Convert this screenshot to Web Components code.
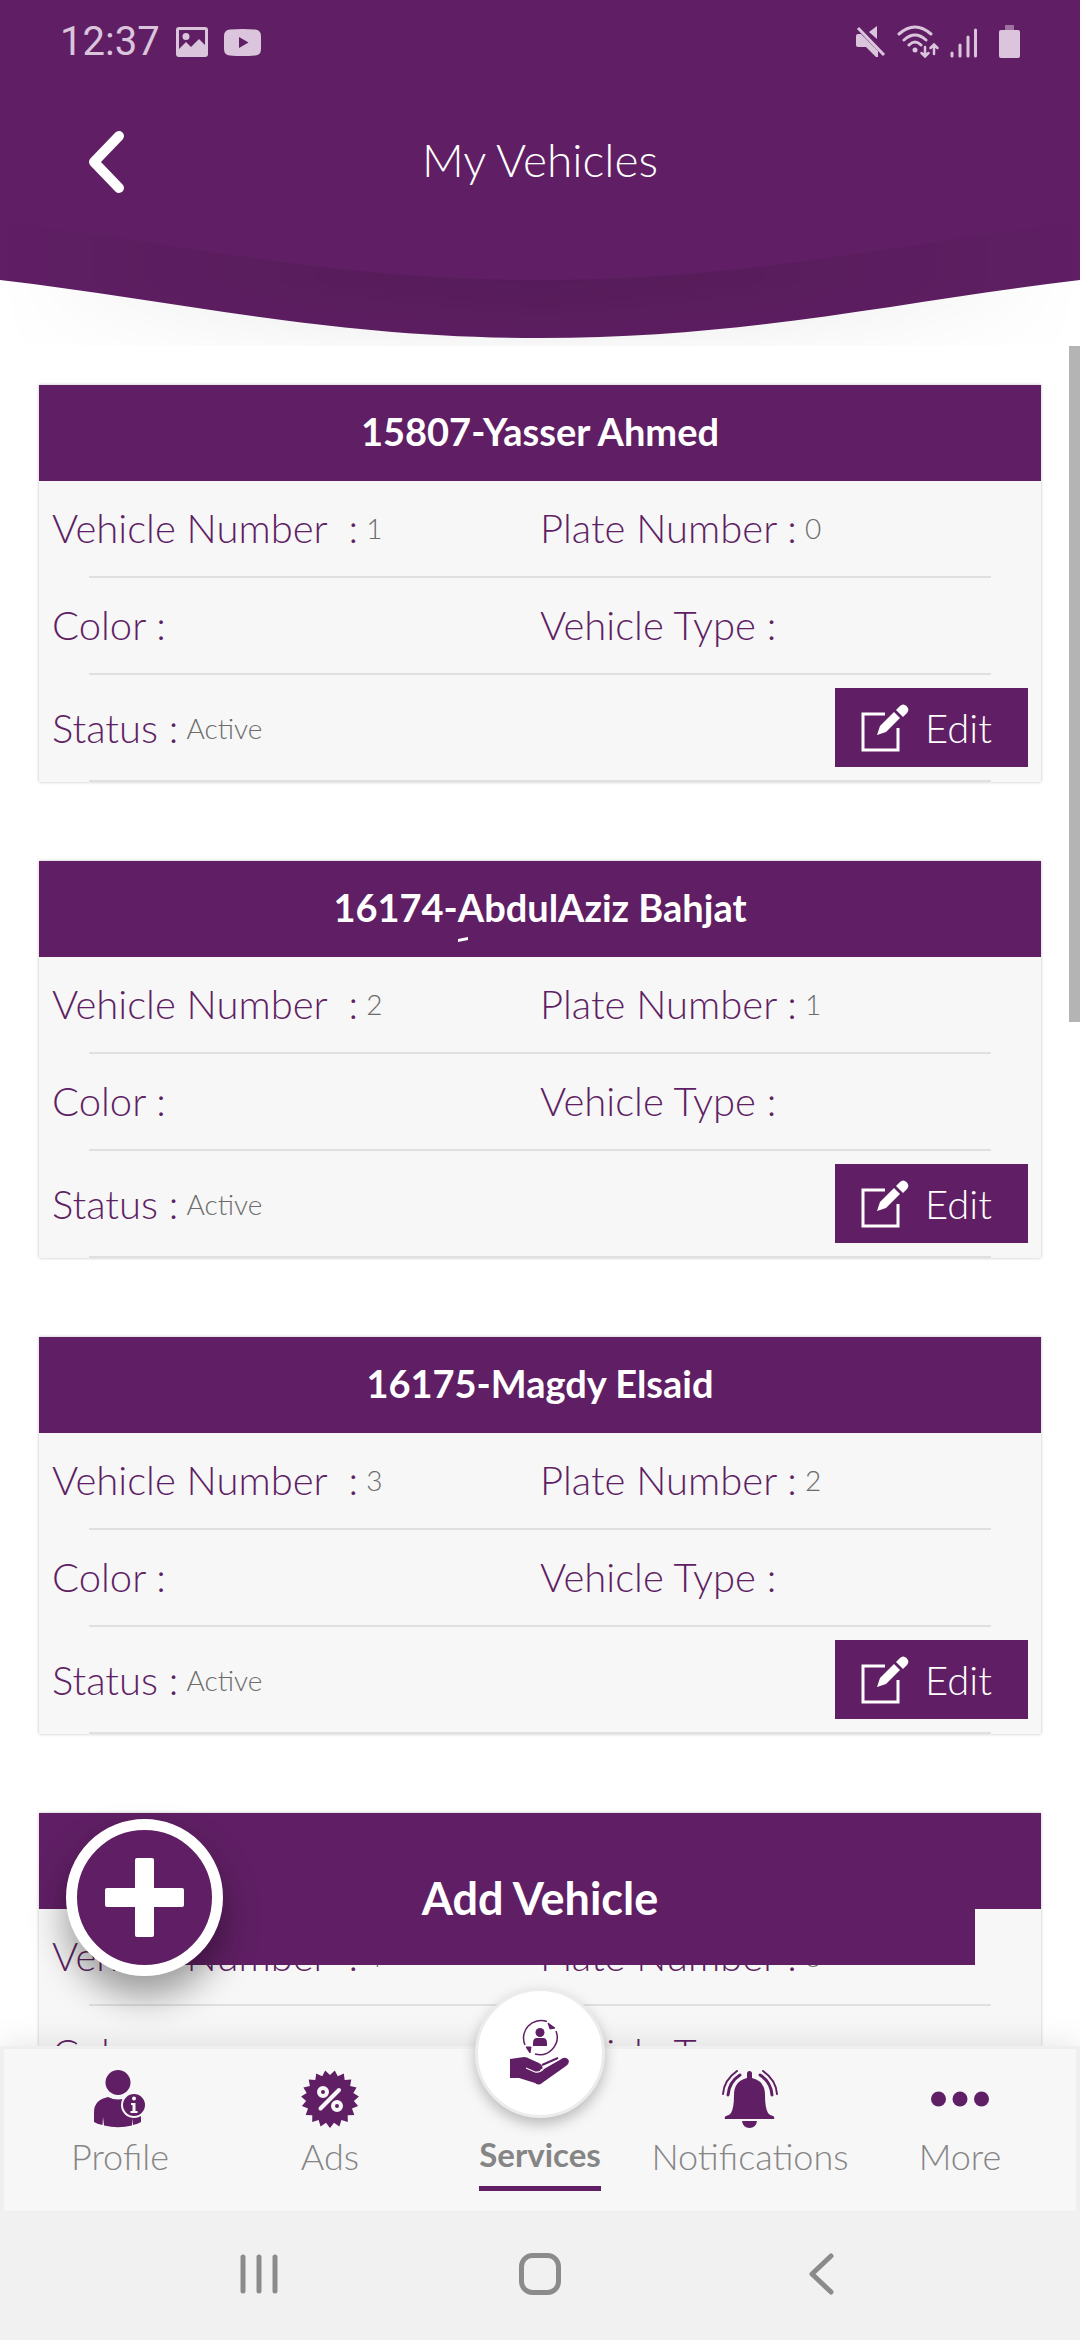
<!DOCTYPE html>
<html lang="en">
<head>
<meta charset="utf-8">
<meta name="viewport" content="width=device-width, initial-scale=1">
<title>My Vehicles</title>
<style>
  :root {
    --brand: #601f64;
    --surface: #f7f7f7;
    --muted: #858585;
  }
  html, body { margin: 0; height: 100%; }
  body {
    font-family: Lato, "Open Sans", sans-serif;
    font-weight: 300;
    background: #fff;
    overflow: hidden;
  }
</style>
</head>
<body>
<vehicles-app></vehicles-app>

<script>
const define = (name, html, setup) => {
  const tpl = document.createElement('template');
  tpl.innerHTML = html;
  customElements.define(name, class extends HTMLElement {
    connectedCallback() {
      if (this.shadowRoot) return;
      this.attachShadow({ mode: 'open' }).appendChild(tpl.content.cloneNode(true));
      if (setup) setup(this, this.shadowRoot);
    }
  });
};

/* ---------- status bar ---------- */
define('status-bar', `
<style>
  :host { display: flex; align-items: center; height: 84px; padding: 0 56px 0 60px; color: #dbc5dd;
    font: 400 40px/40px Roboto, sans-serif; box-sizing: border-box; }
  .side { display: flex; align-items: center; }
  .left { gap: 16px; flex: 1; }
  svg { display: block; fill: currentColor; }
</style>
<div class="side left">
  <span>12:37</span>
  <svg width="32" height="30" viewBox="0 0 32 30"><path fill-rule="evenodd" d="M3 0H29Q32 0 32 3V27Q32 30 29 30H3Q0 30 0 27V3Q0 0 3 0ZM3 3V22L10 15L15 20L23 12L29 18V3ZM10 6a3.500 3.500 0 1 1 0 7a3.500 3.500 0 1 1 0-7Z"/></svg>
  <svg width="37" height="27" viewBox="0 0 37 27"><path fill-rule="evenodd" d="M6 .5Q18.500-.5 31 .5Q37 1 37 7V20Q37 26 31 26.500Q18.500 27.500 6 26.500Q0 26 0 20V7Q0 1 6 .5ZM15 8V19L24.500 13.500Z"/></svg>
</div>
<svg width="168" height="34" viewBox="0 0 168 34">
  <path d="M0 11Q0 9 2 9H5L22 26V32H20L10 22H2Q0 22 0 20Z"/>
  <path d="M13 7L21 1V14Z"/>
  <path d="M2 3L28 30" stroke="currentColor" stroke-width="3" fill="none"/>
  <g fill="none" stroke="currentColor" stroke-width="3" stroke-linecap="round">
    <path d="M43 9Q59-5 75 9M48 15Q59 5 70 15M53 20Q59 14 65 20"/>
    <path d="M69 22V31M65.500 28L69 31.500L72.500 28M78 29V20M74.500 23L78 19.500L81.500 23" stroke-width="2.500"/>
    <path d="M96 28V31M104 20V31M112 12V31M119.500 5V31"/>
  </g>
  <circle cx="59" cy="25" r="2.500"/>
  <rect x="149" y="0" width="9" height="6" opacity=".5"/>
  <rect x="143" y="5" width="21" height="28" rx="2"/>
</svg>
`);

/* ---------- curved header ---------- */
define('app-header', `
<style>
  :host { display: grid; height: 346px; color: #fff; background: #fff; flex: none; }
  .art, .content { grid-area: 1 / 1; min-width: 0; }
  .art { display: block; width: 100%; height: 346px; }
  .content { z-index: 1; }
  .bar { display: grid; grid-template-columns: 130px 1fr 130px; align-items: center; height: 156px;
    padding: 0 42px; }
  button { background: none; border: 0; padding: 0; height: 96px; color: inherit; display: grid; place-items: center; }
  h1 { margin: 0; padding-bottom: 4px; font-size: 46px; line-height: 56px; font-weight: 300; text-align: center; }
</style>
<svg class="art" viewBox="0 0 1080 346" preserveAspectRatio="none" aria-hidden="true">
  <defs>
    <linearGradient id="v" x1="0" y1="225" x2="0" y2="346" gradientUnits="userSpaceOnUse">
      <stop offset="0" stop-opacity=".1"/><stop offset=".48" stop-opacity=".1"/><stop offset="1" stop-opacity=".03"/>
    </linearGradient>
    <linearGradient id="h"><stop offset="0" stop-color="#000"/><stop offset=".3" stop-color="#bbb"/><stop offset=".5" stop-color="#fff"/><stop offset=".7" stop-color="#bbb"/><stop offset="1" stop-color="#000"/></linearGradient>
    <mask id="m"><rect width="1080" height="346" fill="url(#h)"/></mask>
  </defs>
  <path fill="#601f64" d="M0 0H1080V280C900 301 750 338 540 338S180 301 0 280Z"/>
  <path fill="url(#v)" mask="url(#m)" d="M0 222C180 243 330 280 540 280S900 243 1080 222V346H0Z"/>
</svg>
<div class="content">
  <status-bar></status-bar>
  <div class="bar">
    <button aria-label="Back"><svg width="38" height="64" viewBox="0 0 38 64" fill="none" stroke="#fff" stroke-width="10" stroke-linecap="round" stroke-linejoin="round"><path d="M31 6L6 32L31 58"/></svg></button>
    <h1><slot></slot></h1>
  </div>
</div>
`);

/* ---------- one labelled value ---------- */
define('data-field', `
<style>
  :host { display: flex; align-items: center; gap: 8px; min-width: 0; white-space: pre; }
  .label { font-size: 40px; line-height: 48px; color: var(--brand); }
  .value { font-size: 28px; line-height: 36px; color: #6c6c6c; }
</style>
<span class="label"></span><span class="value"><slot></slot></span>
`, (host, root) => { root.querySelector('.label').textContent = host.getAttribute('label'); });

/* ---------- edit button ---------- */
define('edit-button', `
<style>
  :host { display: block; }
  button { display: flex; align-items: center; gap: 16px; width: 193px; height: 79px;
    border: 0; padding: 0 0 0 26px; background: var(--brand); color: #fff; font: inherit; font-size: 40px; line-height: 48px; }
</style>
<button>
  <svg width="48" height="48" viewBox="0 0 48 48" fill="#fff" aria-hidden="true">
    <path d="M24 10H2V46H37V24" fill="none" stroke="#fff" stroke-width="3"/>
    <path d="M16 31L19 22L33 8L39 14L25 28Z"/>
    <path d="M35 6L39 2Q42-1 45.500 2Q49 5.500 46 9L42 13Z"/>
  </svg>
  <span>Edit</span>
</button>
`);

/* ---------- kasra stroke written under the following letter ---------- */
define('kasra-mark', `
<style>
  :host { display: inline-block; position: relative; width: 0; height: 0; }
  svg { position: absolute; left: 0; top: 15px; }
</style>
<svg width="10" height="5" viewBox="0 0 10 5" fill="#fff" aria-hidden="true"><path d="M0 2L10 0V3L0 5Z"/></svg>
`);

/* ---------- vehicle card ---------- */
define('vehicle-card', `
<style>
  :host { display: block; background: var(--surface); box-shadow: 0 0 3px rgba(0,0,0,.25); flex: none; }
  h2 { margin: 0; height: 96px; background: var(--brand); color: #fff; font-size: 38px; line-height: 92px;
    font-weight: 700; text-align: center; }
  .row { display: grid; grid-template-columns: 1fr 1fr; align-items: center; height: 95px; padding: 0 13px; box-sizing: border-box; }
  .fields { padding-bottom: 2px; }
  .row.last { height: 105px; grid-template-columns: 1fr auto; }
  hr { margin: 0 50px; border: 0; height: 2px; background: #e0e0e0; }
</style>
<h2><slot></slot></h2>
<div class="row fields"><data-field label="Vehicle Number  :" class="num"></data-field><data-field label="Plate Number :" class="plate"></data-field></div>
<hr>
<div class="row fields"><data-field label="Color :"></data-field><data-field label="Vehicle Type :"></data-field></div>
<hr>
<div class="row last"><data-field label="Status :">Active</data-field><edit-button></edit-button></div>
<hr>
`, (host, root) => {
  root.querySelector('.num').textContent = host.getAttribute('number');
  root.querySelector('.plate').textContent = host.getAttribute('plate');
});

/* ---------- floating add button ---------- */
define('add-vehicle', `
<style>
  :host { display: block; }
  button { position: relative; display: block; width: 100%; height: 134px; border: 0; padding: 0;
    background: var(--brand); color: #fff; font: inherit; font-weight: 700; font-size: 45px; line-height: 52px; }
  .plus { position: absolute; left: -39px; top: -12px; width: 157px; height: 157px; box-sizing: border-box;
    border: 11px solid #fff; border-radius: 50%; background: var(--brand); display: grid; place-items: center;
    box-shadow: 0 20px 36px rgba(0,0,0,.38); }
</style>
<button><span class="plus"><svg width="79" height="79" viewBox="0 0 79 79" fill="#fff" aria-hidden="true"><rect x="30" width="19" height="79" rx="2"/><rect y="30" width="79" height="19" rx="2"/></svg></span>Add Vehicle</button>
`);

/* ---------- tab bar ---------- */
define('tab-item', `
<style>
  :host { display: block; min-width: 0; }
  a { display: flex; flex-direction: column; align-items: center; color: var(--muted); text-decoration: none;
    font-size: 36px; line-height: 40px; }
  .icon { height: 57px; margin: 21px 0 9px; color: var(--brand); display: grid; place-items: center; }
  .label { white-space: nowrap; }
  :host([active]) .label { font-weight: 700; font-size: 33px; height: 50px; line-height: 36px; border-bottom: 5px solid var(--brand); }
  :host([active]) .icon { position: relative; width: 130px; }
</style>
<a href="#"><span class="icon"><slot></slot></span><span class="label"></span></a>
`, (host, root) => { root.querySelector('.label').textContent = host.getAttribute('label'); });

define('tab-bar', `
<style>
  :host { display: grid; grid-template-columns: repeat(5, 1fr); height: 166px; padding: 0 11px; box-sizing: border-box;
    background: var(--surface); border: 4px solid #efefef; border-top-width: 3px; border-bottom-width: 1px;
    box-shadow: 0 -2px 30px rgba(0,0,0,.1); }
  svg { display: block; }
  .disc { position: absolute; left: 0; top: -82px; width: 130px; height: 130px; box-sizing: border-box; border-radius: 50%;
    background: #fff; border: 3px solid #ececec; box-shadow: 0 6px 14px rgba(0,0,0,.25); display: grid; place-items: center; }
</style>
<tab-item label="Profile">
  <svg width="52" height="58" viewBox="0 0 52 58" fill="#601f64">
    <circle cx="24" cy="12.500" r="12.500"/>
    <path d="M0 52V42Q0 30 14 27Q24 32 34 27Q47 30 47 42V52Q44 54 39 55L38.500 48L38 55.500Q24 59 10 55.500L9 47L8.500 55Q3 54 0 52Z"/>
    <circle cx="40" cy="35" r="12" stroke="#f7f7f7" stroke-width="2"/>
    <circle cx="40" cy="28.500" r="2" fill="#f7f7f7"/>
    <path d="M37 33H41.500V41H43.500V43H36.500V41H38.500V35H37Z" fill="#f7f7f7"/>
  </svg>
</tab-item>
<tab-item label="Ads">
  <svg width="58" height="58" viewBox="0 0 58 58"><path id="burst" fill="#601f64"/>
    <g fill="none" stroke="#f7f7f7" stroke-width="4" stroke-linecap="round"><circle cx="22" cy="22" r="4"/><circle cx="36" cy="36" r="4"/><path d="M38 20L19.500 38.500"/></g></svg>
</tab-item>
<tab-item label="Services" active>
  <span class="disc">
    <svg width="60" height="68" viewBox="0 0 60 68" fill="#601f64">
      <path d="M37 2.500A17.500 17.500 0 0 0 15 26M25 35A17.500 17.500 0 0 0 46 12" fill="none" stroke="#601f64" stroke-width="1.500"/>
      <path d="M38 4L45 9L40 10ZM16 28L21 28L20 34Z" stroke="#601f64"/>
      <circle cx="30" cy="13.500" r="4.500"/><path d="M23 27V24Q23 19 27 19H33Q37 19 37 24V27Z"/>
      <path d="M0 40L14 38Q17 38 20 40L29 44Q34 47 32 51L30 53Q32 53 34 50L53 39Q57 38 59 42Q59 45 56 47L32 64Q29 67 25 64L9 59H0Z"/>
      <path d="M32 46L48 39" fill="none" stroke="#601f64" stroke-width="2"/>
      <path d="M16 49L25 53Q30 54 32 50M34 48L50 40" fill="none" stroke="#fff" stroke-width="1.200"/>
    </svg>
  </span>
</tab-item>
<tab-item label="Notifications">
  <svg width="56" height="58" viewBox="0 0 56 58" fill="#601f64">
    <path d="M25 8V3.500Q25 1 27.500 1T30 3.500V8Q43 11 43 25Q43 38 46 43Q47 45 51 46Q53 47 52 49H3Q2 47 4 46Q8 45 9 43Q12 38 12 25Q12 11 25 8Z"/>
    <path d="M20 51H35Q34 58 27.500 58T20 51Z"/>
    <g fill="none" stroke="#601f64" stroke-linecap="round"><path d="M18 5Q7 12 6 25M38 5Q49 12 50 25" stroke-width="3"/><path d="M15 1Q2 10 1 24M41 1Q54 10 55 24" stroke-width="2"/></g>
  </svg>
</tab-item>
<tab-item label="More">
  <svg width="58" height="58" viewBox="0 0 58 58" fill="#601f64"><circle cx="7.500" cy="29" r="7.500"/><circle cx="29" cy="29" r="7.500"/><circle cx="50.500" cy="29" r="7.500"/></svg>
</tab-item>
`, (host, root) => {
  const n = 38, pts = [];
  for (let i = 0; i < n; i++) {
    const a = Math.PI / 2 + i * 2 * Math.PI / n, r = i % 2 ? 24 : 29;
    pts.push((29 + r * Math.cos(a)).toFixed(1) + ' ' + (29 + r * Math.sin(a)).toFixed(1));
  }
  root.querySelector('#burst').setAttribute('d', 'M' + pts.join('L') + 'Z');
});

/* ---------- system navigation ---------- */
define('system-nav', `
<style>
  :host { display: flex; justify-content: center; align-items: center; gap: 185px; height: 128px; padding-bottom: 4px;
    box-sizing: border-box; background: #f1f1f1; }
  button { width: 96px; height: 96px; background: none; border: 0; padding: 0; display: grid; place-items: center; }
  svg { fill: none; stroke: #8b8b8b; stroke-width: 5; stroke-linecap: round; stroke-linejoin: round; }
</style>
<button aria-label="Recents"><svg width="42" height="42" viewBox="0 0 42 42"><path d="M5 4V38M21 4V38M37 4V38"/></svg></button>
<button aria-label="Home"><svg width="42" height="42" viewBox="0 0 42 42"><rect x="2.500" y="2.500" width="37" height="37" rx="11"/></svg></button>
<button aria-label="Back"><svg width="42" height="42" viewBox="0 0 42 42"><path d="M31 3L12 21L31 39"/></svg></button>
`);

/* ---------- page ---------- */
define('vehicles-app', `
<style>
  :host { display: grid; grid-template-rows: auto minmax(0, 1fr) auto auto; height: 100vh; overflow: hidden; }
  main { position: relative; overflow: hidden; display: flex; min-width: 0; }
  .list { flex: 1; display: flex; flex-direction: column; gap: 79px; padding: 39px 28px 0 39px; min-width: 0; }
  .thumb { width: 11px; height: 676px; background: #b4b4b4; flex: none; }
  add-vehicle { position: absolute; left: 105px; right: 105px; bottom: 81px; }
  tab-bar { z-index: 1; }
  system-nav { z-index: 1; }
</style>
<app-header>My Vehicles</app-header>
<main>
  <div class="list">
    <vehicle-card number="1" plate="0">15807-Yasser Ahmed</vehicle-card>
    <vehicle-card number="2" plate="1">16174-<kasra-mark></kasra-mark>AbdulAziz Bahjat</vehicle-card>
    <vehicle-card number="3" plate="2">16175-Magdy Elsaid</vehicle-card>
    <vehicle-card number="4" plate="3"></vehicle-card>
  </div>
  <div class="thumb"></div>
  <add-vehicle></add-vehicle>
</main>
<tab-bar></tab-bar>
<system-nav></system-nav>
`);
</script>
</body>
</html>
